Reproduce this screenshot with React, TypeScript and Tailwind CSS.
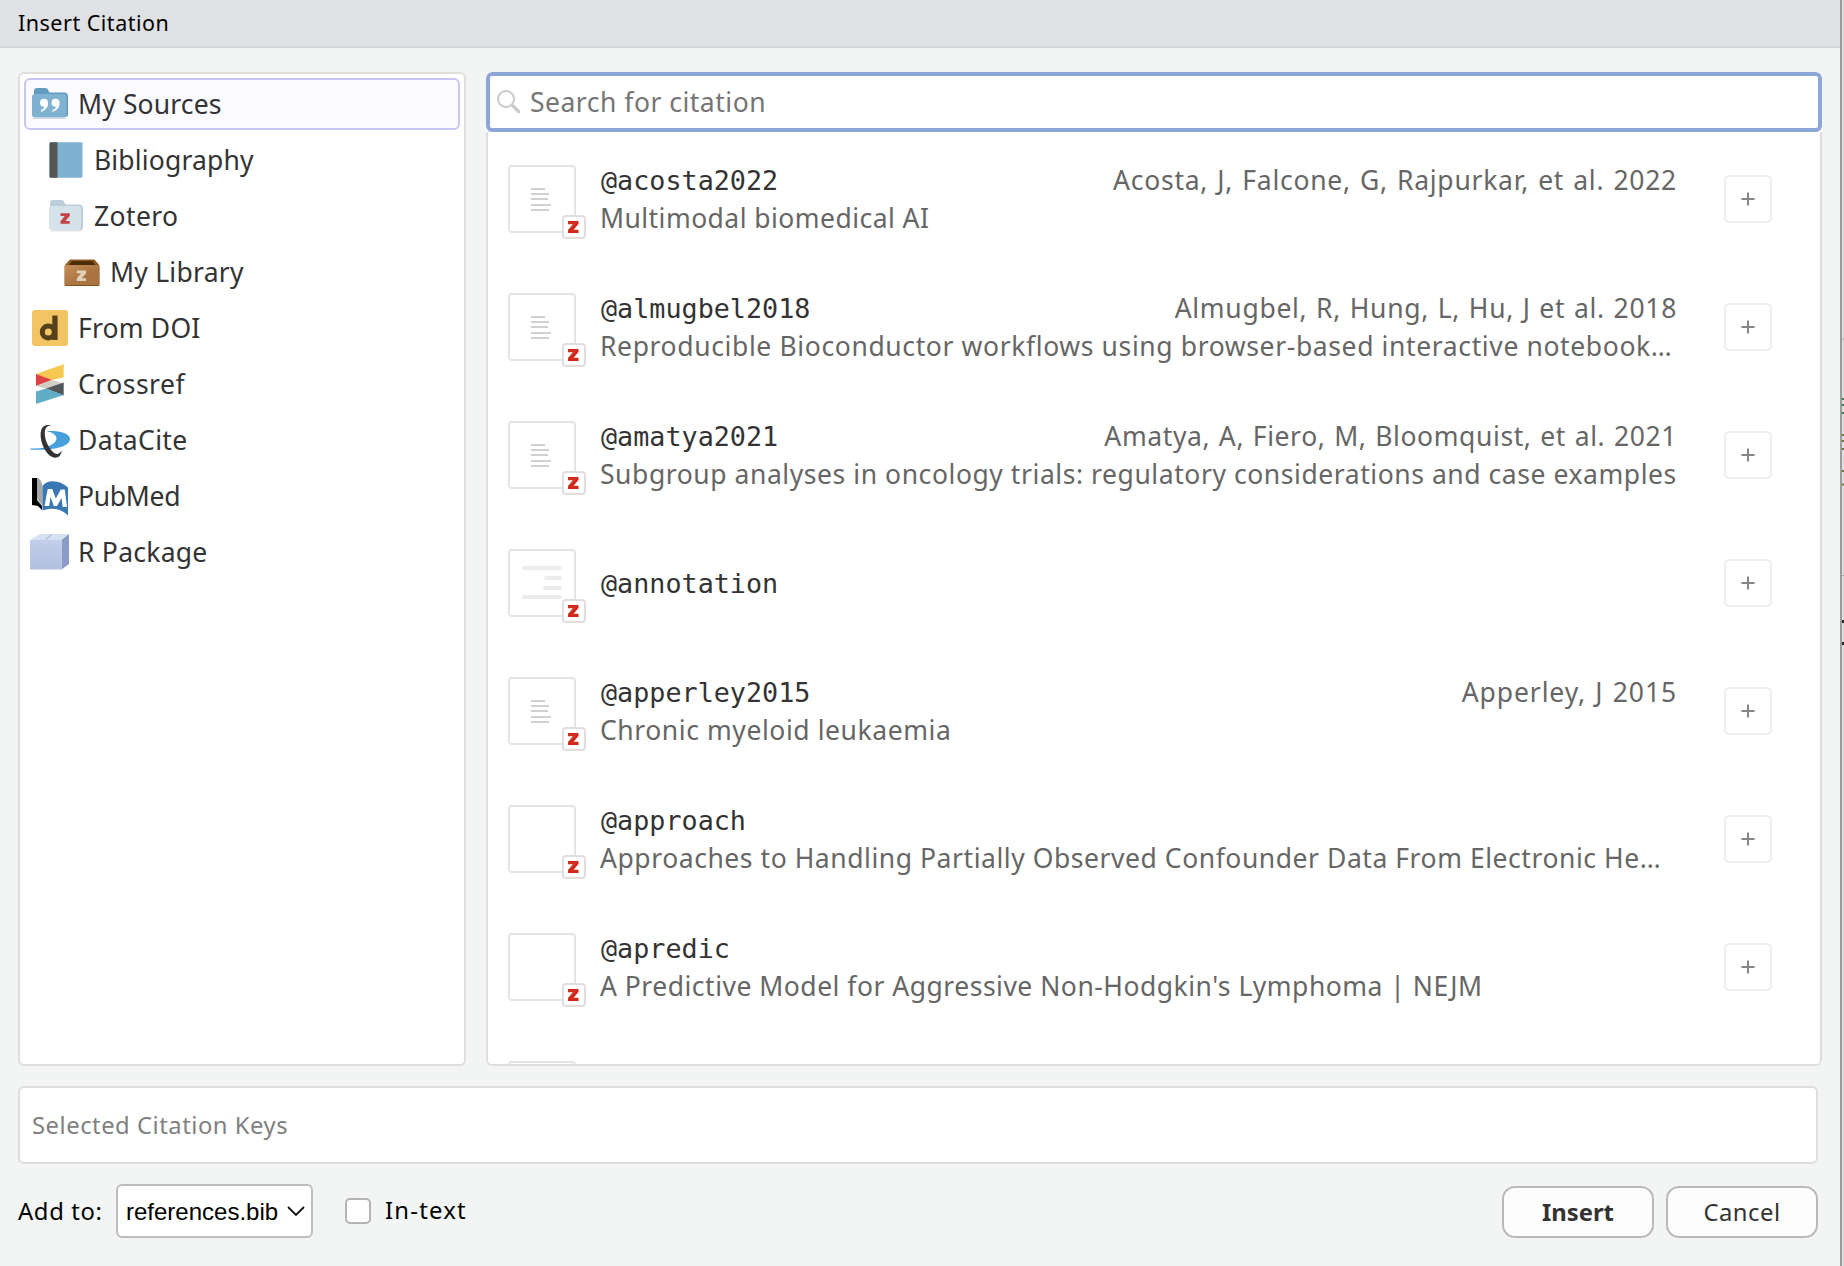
import React from "react";

const sans = "font-['Noto_Sans',sans-serif]";

function Zed({ fill }: { fill: string }) {
  return <polygon points="0,0 10.5,0 10.5,3 5.6,8.8 10.5,8.8 10.5,12 0,12 0,9 4.9,3.200 0,3.200" fill={fill} />;
}

function SourcesIcon() {
  return (
    <svg width="40" height="40" viewBox="30 84 40 40">
      <path d="M34 98V91q0-3 3-3h8q3 0 3.500 3l1 1.500h14.500q4 0 4 4V114q0 3-3 3H40z" fill="#619bbf" />
      <rect x="32" y="94" width="34.500" height="23.500" rx="3" fill="#7fb2d1" />
      <path d="M33 118.500h33" stroke="#d8d8dc" strokeWidth="1" />
      <g fill="#fff">
        <circle cx="44" cy="102.800" r="4" />
        <path d="M48 102.500q.4 7-7 9.500v-2q4-1.500 4-5z" />
        <circle cx="55.500" cy="102.800" r="4" />
        <path d="M59.500 102.500q.4 7-7 9.500v-2q4-1.500 4-5z" />
      </g>
    </svg>
  );
}

function BookIcon() {
  return (
    <svg width="40" height="40" viewBox="46 140 40 40">
      <rect x="49.500" y="142.300" width="33" height="35.500" rx="1" fill="#7fb2d1" />
      <path d="M51 142.300h6.500v35.500H51q-1.500 0-1.500-1.500v-32.500q0-1.500 1.500-1.500z" fill="#555" />
    </svg>
  );
}

function ZoteroFolderIcon() {
  return (
    <svg width="40" height="40" viewBox="46 196 40 40">
      <path d="M50 208v-5q0-3 3-3h8q3 0 3.500 3l1 1.500H79q4 0 4 4V227q0 3-3 3H56z" fill="#bccddb" />
      <rect x="49" y="206" width="32" height="24" rx="3" fill="#d6e2ea" />
      <path d="M51 230.800h30" stroke="#d3d6d8" strokeWidth="1" />
      <g transform="translate(60.500 213.300) scale(.88)"><Zed fill="#c4424a" /></g>
    </svg>
  );
}

function LibraryIcon() {
  return (
    <svg width="40" height="40" viewBox="62 252 40 40">
      <defs>
        <linearGradient id="box" x1="0" y1="0" x2="1" y2="1">
          <stop offset="0" stopColor="#c58e5a" />
          <stop offset=".6" stopColor="#a97440" />
        </linearGradient>
      </defs>
      <path d="M70 259.500h24.500l5 6H64.500z" fill="#8d5a1e" />
      <path d="M72 261h20.500l3 4.500H68.500z" fill="#4b2d08" />
      <rect x="64.300" y="265" width="35.400" height="21" rx="1.500" fill="url(#box)" />
      <path d="M65 285.500h34" stroke="#7f5020" strokeWidth="1.200" />
      <g transform="translate(76.800 270.500) scale(.88)"><Zed fill="#e3cfba" /></g>
    </svg>
  );
}

function DoiIcon() {
  return (
    <svg width="40" height="40" viewBox="30 308 40 40">
      <rect x="32" y="310" width="36" height="36" rx="3" fill="#f3c464" />
      <circle cx="48.300" cy="332" r="6" fill="none" stroke="#54411a" strokeWidth="5" />
      <path d="M52.300 315.500h5.300v24.500h-5.300z" fill="#54411a" />
    </svg>
  );
}

function CrossrefIcon() {
  return (
    <svg width="40" height="44" viewBox="30 362 40 44">
      <path d="M36 374l27.700-9.700v13L50 380.500z" fill="#f6c851" />
      <path d="M36 374v12l16-6z" fill="#dd4346" />
      <path d="M36 386l16-6 11.700 3.500L46 388.500z" fill="#d3cec2" />
      <path d="M46 388.500l17.700-6v13z" fill="#4f5759" />
      <path d="M36 391.500l10-3 17.700 6.500L36 404z" fill="#60aec6" />
    </svg>
  );
}

function DataCiteIcon() {
  return (
    <svg width="40" height="40" viewBox="30 420 40 40">
      <path d="M46.500 431.200C58 430.500 70 433 70 439c0 7-14 11.500-39.500 10.800v-1.300c7 0 12-.3 16.500-1.800 6-2 9.500-5 9.500-8.500 0-3-4-6-10-7z" fill="#479fdb" />
      <path d="M52 426.300C48.500 423.800 43 424.600 41.200 430c-2 7.500 1.300 18 6.800 24 4.500 4.700 9.800 4.500 12 1.500 1-1.500 1.500-3 1.700-5-2.500 4.500-6 4.500-9.700.5-5-5.500-8.200-14.500-7-20.500.8-4 3.500-5.500 7-4.200z" fill="#333" />
    </svg>
  );
}

function PubMedIcon() {
  return (
    <svg width="40" height="42" viewBox="30 475 40 42">
      <path d="M32 478h5v22l5 6v4l-4-4-6-1z" fill="#000" />
      <path d="M37 477.500c3 1 5 4 5.500 9V506l-5.500-7z" fill="#a8a8a8" />
      <path d="M42.500 486c4-6.500 17-6.500 25.500 1.500v28c-6-6-15-9-25.500-5z" fill="#3a78b3" />
      <path d="M44.500 506l3.200-17h4.500l3.600 9.500 5-9h4l2.200 17.500h-4.300l-1.200-9-4.500 8h-3.200l-3.200-9-1.400 9z" fill="#fff" />
    </svg>
  );
}

function PackageIcon() {
  return (
    <svg width="40" height="40" viewBox="30 531 40 40">
      <defs>
        <linearGradient id="pkg" x1="0" y1="0" x2="0" y2="1">
          <stop offset="0" stopColor="#c3cfe9" />
          <stop offset="1" stopColor="#b1c0e0" />
        </linearGradient>
      </defs>
      <path d="M30 539l10-6h29l-7.500 6z" fill="#d5e0f0" />
      <path d="M46 538.500l5.500-5" stroke="#b0bddc" strokeWidth="1.500" />
      <path d="M61.500 539l7.500-6v30l-7.500 5.500z" fill="#8b9bc8" />
      <rect x="30" y="539" width="31.500" height="29.500" fill="url(#pkg)" />
    </svg>
  );
}

type Source = { label: string; icon: React.ReactNode; pad: string; track: string; selected?: boolean };

const sources: Source[] = [
  { label: "My Sources", icon: <SourcesIcon />, pad: "pl-1", track: "tracking-[0.15px]", selected: true },
  { label: "Bibliography", icon: <BookIcon />, pad: "pl-5", track: "tracking-[0.15px]" },
  { label: "Zotero", icon: <ZoteroFolderIcon />, pad: "pl-5", track: "tracking-[0.4px]" },
  { label: "My Library", icon: <LibraryIcon />, pad: "pl-9", track: "tracking-[0.25px]" },
  { label: "From DOI", icon: <DoiIcon />, pad: "pl-1", track: "tracking-[0.2px]" },
  { label: "Crossref", icon: <CrossrefIcon />, pad: "pl-1", track: "tracking-[0.5px]" },
  { label: "DataCite", icon: <DataCiteIcon />, pad: "pl-1", track: "tracking-[0.35px]" },
  { label: "PubMed", icon: <PubMedIcon />, pad: "pl-1", track: "tracking-[-0.3px]" },
  { label: "R Package", icon: <PackageIcon />, pad: "pl-1", track: "tracking-[0.25px]" },
];

type Citation = {
  id: string;
  title?: string;
  titleTrack?: string;
  authors?: string;
  authorsTrack?: string;
  thumb: "article" | "note" | "blank";
};

const citations: Citation[] = [
  { id: "@acosta2022", title: "Multimodal biomedical AI", titleTrack: "tracking-[0.45px]", authors: "Acosta, J, Falcone, G, Rajpurkar, et al. 2022", authorsTrack: "tracking-[0.74px] [word-spacing:1.5px]", thumb: "article" },
  { id: "@almugbel2018", title: "Reproducible Bioconductor workflows using browser-based interactive notebook…", titleTrack: "tracking-[0.62px]", authors: "Almugbel, R, Hung, L, Hu, J et al. 2018", authorsTrack: "tracking-[0.7px] [word-spacing:1.1px]", thumb: "article" },
  { id: "@amatya2021", title: "Subgroup analyses in oncology trials: regulatory considerations and case examples", titleTrack: "tracking-[0.56px]", authors: "Amatya, A, Fiero, M, Bloomquist, et al. 2021", authorsTrack: "tracking-[0.6px] [word-spacing:1.2px]", thumb: "article" },
  { id: "@annotation", thumb: "note" },
  { id: "@apperley2015", title: "Chronic myeloid leukaemia", titleTrack: "tracking-[0.57px]", authors: "Apperley, J 2015", authorsTrack: "tracking-[0.9px] [word-spacing:1.5px]", thumb: "article" },
  { id: "@approach", title: "Approaches to Handling Partially Observed Confounder Data From Electronic He…", titleTrack: "tracking-[0.55px]", thumb: "blank" },
  { id: "@apredic", title: "A Predictive Model for Aggressive Non-Hodgkin's Lymphoma | NEJM", titleTrack: "tracking-[0.5px]", thumb: "blank" },
  { id: "", thumb: "blank" },
];

function Thumb({ kind }: { kind: Citation["thumb"] }) {
  return (
    <div className="relative h-[68px] w-[68px] shrink-0 rounded-[4px] border-2 border-[#e4e4e4] bg-white">
      {kind === "article" && (
        <svg className="block" width="64" height="64" viewBox="2 2 64 64" stroke="#d0d0d0" strokeWidth="2">
          <path d="M23 24h14M23 29h18M23 34h17M23 40h20M23 45h18" />
        </svg>
      )}
      {kind === "note" && (
        <svg className="block" width="64" height="64" viewBox="2 2 64 64" stroke="#ececec" strokeWidth="4" strokeLinecap="round">
          <path d="M16 19h36M38 29h14M37 39h15M16 48h36" />
        </svg>
      )}
      <div className="absolute left-[52px] top-[48px] flex h-6 w-6 items-center justify-center rounded-[4px] border-2 border-[#dedede] bg-white">
        <svg width="12" height="12" viewBox="0 0 12 12"><Zed fill="#d12b1c" /></svg>
      </div>
    </div>
  );
}

function CitationRow({ c }: { c: Citation }) {
  return (
    <div className="flex h-32 shrink-0 items-center pl-5 pr-12">
      <Thumb kind={c.thumb} />
      <div className="ml-6 flex w-[1077px] flex-col pt-[2px]">
        <div className="flex h-[38px] items-center justify-between whitespace-nowrap">
          <span className="pl-px font-['DejaVu_Sans_Mono',monospace] text-[26.750px] text-[#333]">{c.id}</span>
          {c.authors && <span className={"text-[26.500px] text-[#666] " + c.authorsTrack}>{c.authors}</span>}
        </div>
        {c.title && <div className={"flex h-[38px] items-center whitespace-nowrap text-[26.500px] text-[#666] " + c.titleTrack}>{c.title}</div>}
      </div>
      <button className="ml-auto flex h-12 w-12 items-center justify-center rounded-[5px] border-2 border-[#eee] bg-white">
        <svg width="14" height="14" viewBox="0 0 14 14" stroke="#858585" strokeWidth="2"><path d="M7 .5v13M.5 7h13" /></svg>
      </button>
    </div>
  );
}

export default function App() {
  return (
    <div className={"flex h-[1266px] w-[1844px] overflow-hidden bg-[#ddd] " + sans}>
      <div className="flex w-[1842px] flex-col rounded-tl-[3px] border-r-2 border-[#9b9b9b] bg-[#f3f5f4]">
        <header className="flex h-12 items-center rounded-tl-[3px] border-b-2 border-[#d5d6da] bg-[#e0e1e5] pl-[18px] text-[21.500px] tracking-[0.5px] text-black">
          <span>Insert Citation</span>
        </header>
        <main className="mt-6 flex h-[994px] shrink-0 gap-5 pl-[18px]">
          <nav className="flex w-[448px] flex-col gap-1 rounded-[6px] border-2 border-[#dedede] bg-white p-1">
            {sources.map((s) => (
              <div
                key={s.label}
                className={"flex h-[52px] shrink-0 items-center rounded-[6px] border-2 text-[26.500px] text-[#333] " + s.pad + (s.selected ? " border-[#c8c6f5] bg-[#fbfaff]" : " border-transparent")}
              >
                {s.icon}
                <span className={"ml-2 pt-[2px] " + s.track}>{s.label}</span>
              </div>
            ))}
          </nav>
          <section className="flex w-[1336px] flex-col overflow-hidden rounded-[6px] bg-white">
            <div className="flex h-[60px] shrink-0 items-center rounded-[6px] border-4 border-[#8fa7d8] bg-white pl-[7px]">
              <svg width="24" height="24" viewBox="0 0 24 24" fill="none" stroke="#cacaca" strokeLinecap="round">
                <circle cx="9" cy="9" r="8" strokeWidth="2" />
                <path d="M16 16l5.500 5.500" strokeWidth="3.500" />
              </svg>
              <span className="ml-[9px] pt-[2px] text-[26.500px] tracking-[0.5px] text-[#757575]">Search for citation</span>
            </div>
            <div className="flex grow flex-col overflow-hidden rounded-b-[6px] border-x-2 border-b-2 border-[#dedede] pt-[3px]">
              {citations.map((c, i) => <CitationRow key={i} c={c} />)}
            </div>
          </section>
        </main>
        <div className="ml-[18px] mt-5 flex h-[78px] w-[1800px] items-center rounded-[6px] border-2 border-[#dedede] bg-white pl-3 pt-[2px] text-[23.800px] tracking-[0.520px] text-[#808080]">
          <span>Selected Citation Keys</span>
        </div>
        <footer className="mt-5 flex h-[54px] w-[1818px] items-center pl-[18px] text-black">
          <span className="w-[98px] pt-px text-[23.800px] tracking-[0.650px]">Add to:</span>
          <div className="flex h-[54px] w-[197px] items-center rounded-[6px] border-2 border-[#bdbdbd] bg-white pl-2 font-['Liberation_Sans',sans-serif] text-[24px]">
            <span className="pt-px">references.bib</span>
            <svg className="ml-[8px]" width="20" height="12" viewBox="0 0 20 12" fill="none" stroke="#111" strokeWidth="1.800"><path d="M2 2l8 8 8-8" /></svg>
          </div>
          <div className="ml-8 h-[26px] w-[26px] rounded-[5px] border-2 border-[#b3b3b3] bg-white" />
          <span className="ml-[14px] text-[23.800px] tracking-[1.250px]">In-text</span>
          <div className="ml-auto mt-[2px] flex gap-3 text-[23.800px] text-[#333]">
            <button className="h-[52px] w-[152px] rounded-[13px] border-2 border-[#b9b9b9] bg-[#fdfdfd] pt-px font-bold">Insert</button>
            <button className="h-[52px] w-[152px] rounded-[13px] border-2 border-[#b9b9b9] bg-[#fdfdfd] pt-px tracking-[0.5px]">Cancel</button>
          </div>
        </footer>
      </div>
      <svg width="2" height="1266" viewBox="0 0 2 1266">
        <path d="M0 339h2M0 575.500h2" stroke="#aaa" />
        <path d="M0 399h2M0 405h2M0 413h2" stroke="#2f7a54" strokeWidth="2" />
        <path d="M0 435h2M0 441h2M0 449h2M0 471h2M0 484.500h2" stroke="#6b7328" strokeWidth="2" />
        <path d="M0 621.500h2M0 643.500h2" stroke="#222" strokeWidth="3" />
      </svg>
    </div>
  );
}
